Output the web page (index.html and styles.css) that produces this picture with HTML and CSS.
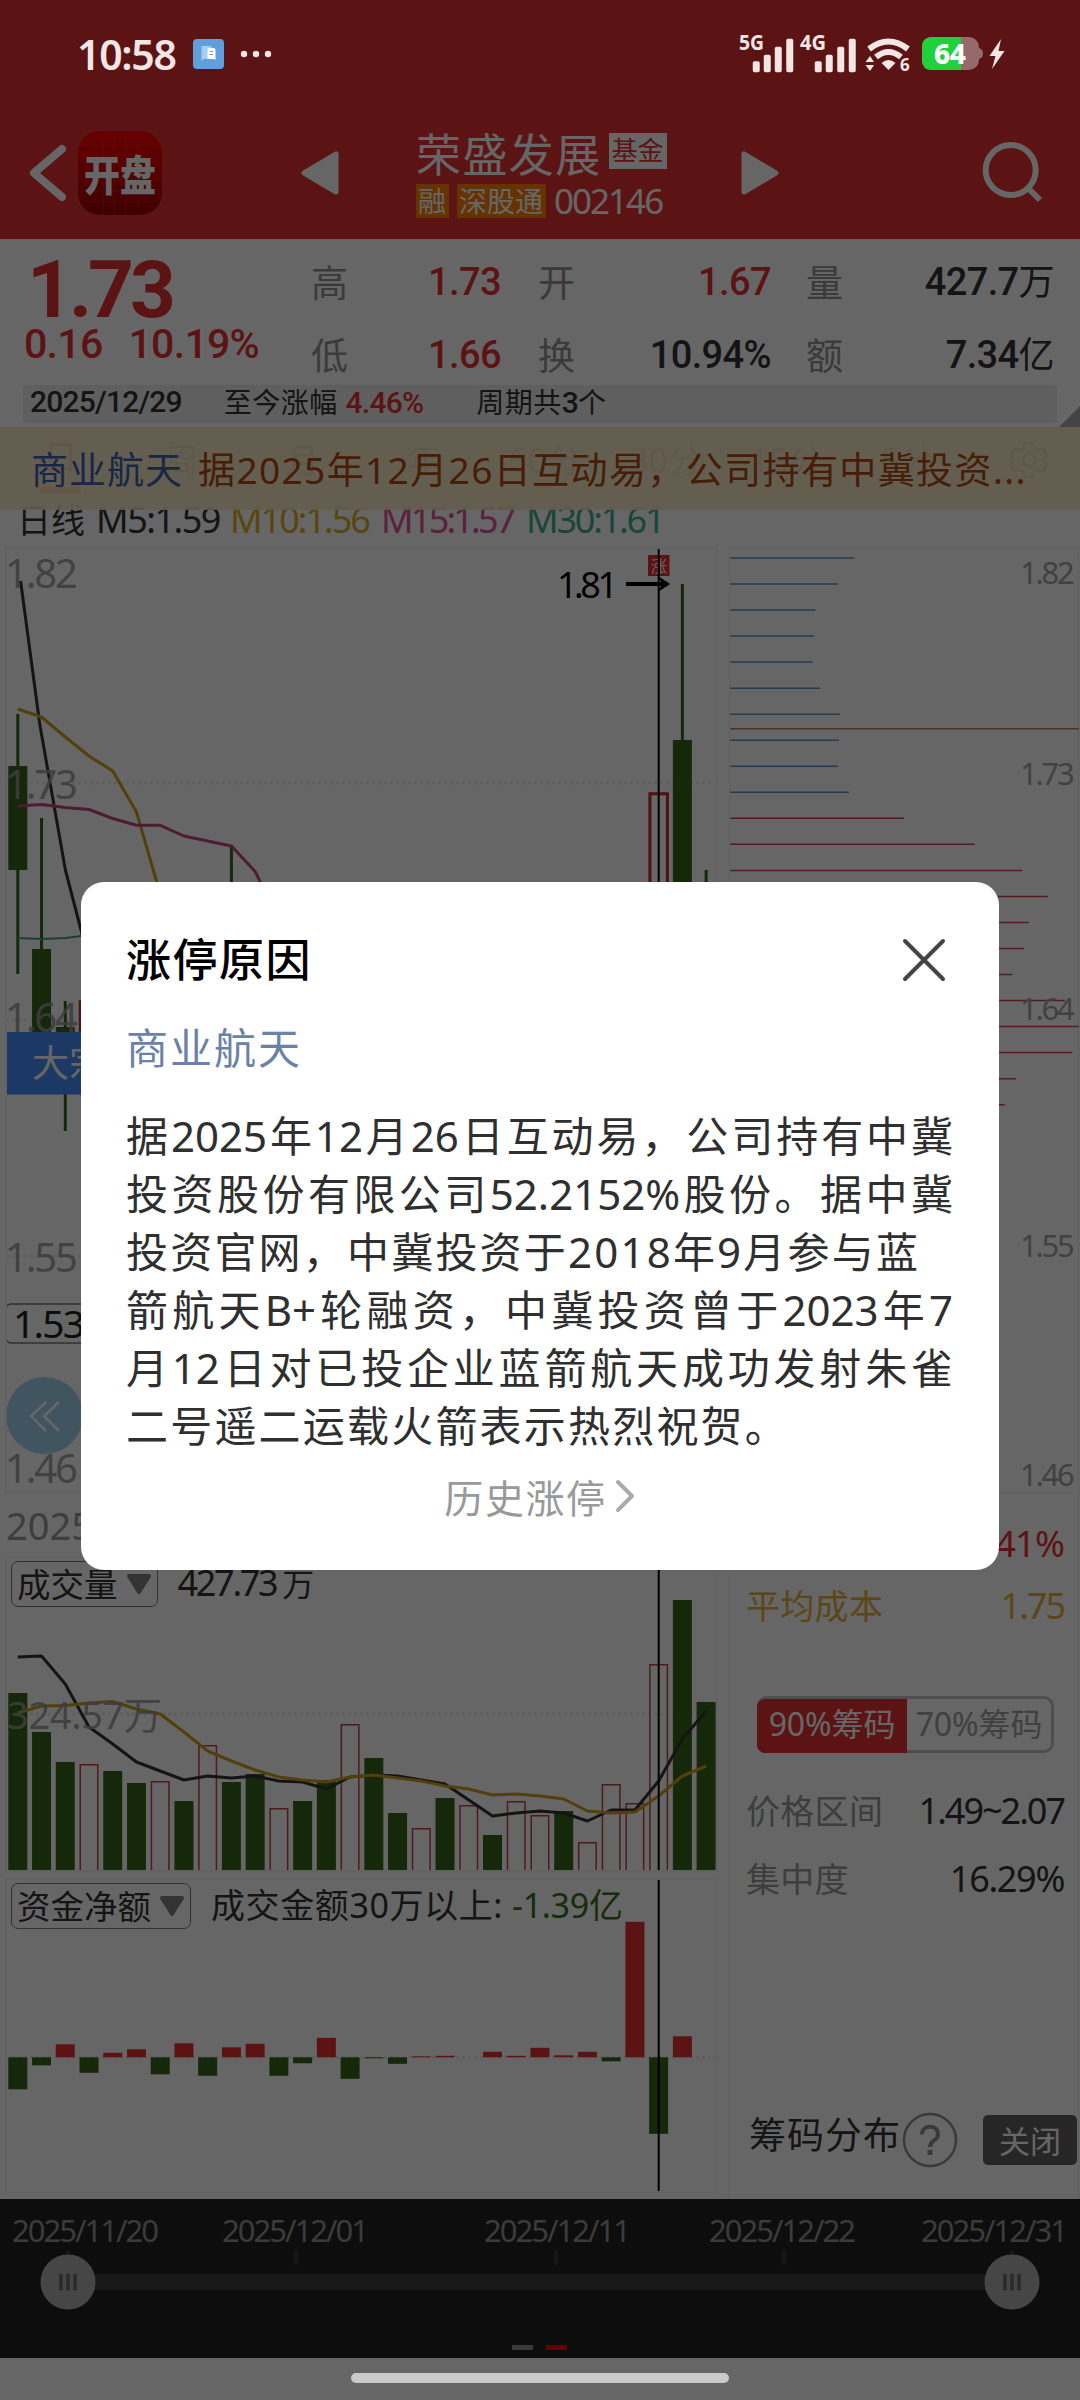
FILE: index.html
```
<!DOCTYPE html>
<html lang="zh-CN">
<head>
<meta charset="UTF-8">
<meta name="viewport" content="width=1080">
<title>荣盛发展 002146</title>
<link rel="stylesheet" href="styles.css">
</head>
<body>
<div class="page">

	<!-- app -->
	<div class="app">
		<header class="topbar">
			<svg class="back" width="38" height="58" viewBox="0 0 38 58"><path d="M34 5 L6 29 L34 53" fill="none" stroke="#fff" stroke-width="8" stroke-linecap="round" stroke-linejoin="round"/></svg>
			<svg class="logo" width="84" height="84" viewBox="0 0 84 84">
				<defs><linearGradient id="lg" x1="0" y1="0" x2="0" y2="1"><stop offset="0" stop-color="#ff0000"/><stop offset=".4" stop-color="#dc0000"/><stop offset="1" stop-color="#9c0000"/></linearGradient></defs>
				<rect width="84" height="84" rx="22" fill="url(#lg)"/>
				<path d="M25 0V84M36 0V84M48 0V84M60 0V84M0 13H84M0 25H84M0 48H84M0 60H84M0 71H84" stroke="#ff5a5a" stroke-opacity=".22" fill="none"/>
				<g transform="translate(6 60) scale(1 1.18)"><text class="logo-text">开盘</text></g>
			</svg>
			<svg class="prev" width="38" height="44" viewBox="0 0 38 44"><path d="M3 22 L35 3 V41 Z" fill="#fff" stroke="#fff" stroke-width="5" stroke-linejoin="round"/></svg>
			<div class="stock">
				<div class="stock-name">荣盛发展<span class="tag-fund">基金</span></div>
				<div class="stock-code"><span class="tag">融</span><span class="tag">深股通</span>002146</div>
			</div>
			<svg class="next" width="38" height="44" viewBox="0 0 38 44"><path d="M35 22 L3 3 V41 Z" fill="#fff" stroke="#fff" stroke-width="5" stroke-linejoin="round"/></svg>
			<svg class="search" width="62" height="64" viewBox="0 0 62 64"><circle cx="28.700" cy="29" r="25" fill="none" stroke="#fff" stroke-width="6"/><path d="M46 47 L58 59" stroke="#fff" stroke-width="6"/></svg>
		</header>

		<section class="quote">
			<div class="price">
				<div class="price-now">1.73</div>
				<div class="price-diff"><span>0.16</span><span>10.19%</span></div>
			</div>
			<dl class="facts">
				<dt>高</dt><dd class="up">1.73</dd><dt>开</dt><dd class="up">1.67</dd><dt>量</dt><dd>427.7<i>万</i></dd>
				<dt>低</dt><dd class="up">1.66</dd><dt>换</dt><dd>10.94%</dd><dt>额</dt><dd>7.34<i>亿</i></dd>
			</dl>
		</section>

		<div class="period-wrap">
			<div class="period">
				<b>2025/12/29</b>
				<span class="since">至今涨幅 <b class="up">4.46%</b></span>
				<span class="count">周期共<b>3</b>个</span>
			</div>
			<svg class="corner" width="22" height="22"><path d="M22 0V22H0Z" fill="#aaa"/></svg>
		</div>

		<div class="tabs-area">
			<nav class="tabs">
				<span class="on">日</span><span>周</span><span>月</span><span>年</span><span>60分</span><span>30分</span><span>15分</span><span>5分</span>
				<span><svg width="38" height="38" viewBox="0 0 38 38"><path d="M15 2h8l1.500 5 4 2.300 5-1.300 4 7-3.500 4 3.500 4-4 7-5-1.300-4 2.300L23 36h-8l-1.500-5-4-2.300-5 1.300-4-7L4 19l-3.500-4 4-7 5 1.300 4-2.300Z" fill="none" stroke="#888" stroke-width="3" stroke-linejoin="round"/><circle cx="19" cy="19" r="6" fill="none" stroke="#888" stroke-width="3"/></svg></span>
			</nav>
			<div class="ma">
				<span class="m-day">日线</span><span class="m5">M5:1.59</span><span class="m10">M10:1.56</span><span class="m15">M15:1.57</span><span class="m30">M30:1.61</span>
			</div>
			<div class="banner"><span class="topic">商业航天</span><span class="news">据2025年12月26日互动易，公司持有中冀投资...</span></div>
		</div>

		<main class="board">
			<div class="charts">
				<svg class="panel" id="kline" width="713" height="946" viewBox="5 547 713 946"></svg>
				<div class="from-date">2025/11/20</div>
				<div class="panel stack">
					<svg id="volume" width="713" height="316" viewBox="5 1556 713 316"></svg>
					<div class="panel-head">
						<span class="select">成交量<svg width="24" height="20" viewBox="0 0 24 20"><path d="M2 2H22L12 18Z" fill="#808080" stroke="#808080" stroke-width="4" stroke-linejoin="round"/></svg></span>
						<span class="vol-now">427.73<i>万</i></span>
					</div>
				</div>
				<div class="panel stack fund">
					<svg id="fund" width="713" height="315" viewBox="5 1878 713 315"></svg>
					<div class="panel-head">
						<span class="select">资金净额<svg width="24" height="20" viewBox="0 0 24 20"><path d="M2 2H22L12 18Z" fill="#808080" stroke="#808080" stroke-width="4" stroke-linejoin="round"/></svg></span>
						<span class="fund-now">成交金额30<i>万以上:</i></span><span class="down">-1.39<i>亿</i></span>
					</div>
				</div>
			</div>
			<aside class="side">
				<svg class="chips" id="chips" width="349" height="947" viewBox="730 547 349 947"></svg>
				<div class="row profit"><span></span><span>9.41%</span></div>
				<div class="row cost"><span>平均成本</span><span>1.75</span></div>
				<div class="switch"><span class="on">90%筹码</span><span>70%筹码</span></div>
				<div class="row range"><span>价格区间</span><b>1.49~2.07</b></div>
				<div class="row focus"><span>集中度</span><b>16.29%</b></div>
				<div class="chips-foot">
					<span>筹码分布</span>
					<svg width="56" height="56" viewBox="0 0 56 56"><circle cx="28" cy="28" r="26" fill="none" stroke="#909090" stroke-width="2.500"/><path d="M20 22.500C20 12 36 12 36 22.500C36 29 28 28 28 35" fill="none" stroke="#909090" stroke-width="4"/><rect x="25.500" y="38" width="5" height="5" fill="#909090"/></svg>
					<button class="close-chips">关闭</button>
				</div>
			</aside>
		</main>

		<footer class="timeline">
			<svg id="slider" width="1080" height="159" viewBox="0 2199 1080 159"></svg>
		</footer>
	</div>

	<!-- dialog -->
	<div class="mask">
		<div class="dialog">
			<div class="dialog-head">
				<h1>涨停原因</h1>
				<svg width="44" height="44" viewBox="0 0 44 44"><path d="M3 3L41 41M41 3L3 41" stroke="#444" stroke-width="4" stroke-linecap="round"/></svg>
			</div>
			<h2>商业航天</h2>
			<p>
				<span class="full">据2025年12月26日互动易，公司持有中冀</span>
				<span class="full">投资股份有限公司52.2152%股份。据中冀</span>
				<span>投资官网，中冀投资于2018年9月参与蓝</span>
				<span class="full">箭航天B+轮融资，中冀投资曾于2023年7</span>
				<span class="full">月12日对已投企业蓝箭航天成功发射朱雀</span>
				<span>二号遥二运载火箭表示热烈祝贺。</span>
			</p>
			<a class="history">历史涨停<svg width="20" height="34" viewBox="0 0 20 34"><path d="M3 3L17 17L3 31" fill="none" stroke="#aaa" stroke-width="4" stroke-linecap="round" stroke-linejoin="round"/></svg></a>
		</div>
	</div>

	<!-- system bars -->
	<div class="system">
		<div class="status">
			<span class="clock">10:58</span>
			<svg class="note" width="31" height="30" viewBox="0 0 31 30"><rect width="31" height="30" rx="4" fill="#5f9fdc"/><path d="M8.500 7H17Q19 7 19 9V20H10.500L8.500 22Z" fill="#a5cdf2"/><path d="M14.500 11Q14.500 9 16.500 9H20.500Q22.500 9 22.500 11V21L21 20H14.500Z" fill="#fff"/><path d="M16.500 12.500H20M16.500 15.500H20" stroke="#5f9fdc"/></svg>
			<svg class="dots" width="32" height="8" viewBox="0 0 32 8"><circle cx="4" cy="4" r="3.200"/><circle cx="16" cy="4" r="3.200"/><circle cx="28" cy="4" r="3.200"/></svg>
			<svg class="signals" width="270" height="60" viewBox="736 24 270 60">
				<text x="740" y="50" class="net" textLength="25" lengthAdjust="spacingAndGlyphs">5G</text>
				<path d="M755.500 63h3.500v7.500h-3.500zM766.500 56.500h3.500v14h-3.500zM777.500 48.500h3.500v22h-3.500zM789 40.500h3.500v30h-3.500z" stroke="#f5e6e6" stroke-width="3.500" stroke-linejoin="round"/>
				<text x="801" y="50" class="net" textLength="26" lengthAdjust="spacingAndGlyphs">4G</text>
				<path d="M817.500 63h3.500v7.500h-3.500zM828.500 56.500h3.500v14h-3.500zM840 48.500h3.500v22h-3.500zM851.500 40.500h3.500v30h-3.500z" stroke="#f5e6e6" stroke-width="3.500" stroke-linejoin="round"/>
				<path d="M870 49Q889.500 34 909 49M877 57Q889.500 47 902 57" fill="none" stroke="#f5e6e6" stroke-width="6"/>
				<path d="M882.500 63Q889.500 57 896.500 63L889.500 70Z"/>
				<path d="M866.500 62L871 56L875 62ZM866.500 65L871 71L875 65Z"/>
				<text x="901" y="71" class="wifi6">6</text>
				<rect x="923" y="37" width="57" height="33" rx="10" fill="#966a6b"/>
				<path d="M980 48q4 1 4 5.500t-4 5.500z" fill="#966a6b"/>
				<path d="M933 37H962V70H933Q923 70 923 60V47Q923 37 933 37Z" fill="#20d13c"/>
				<text x="935" y="63.500" class="power" textLength="32">64</text>
				<path d="M1002 39L990.500 56H996.500L993 69L1005.500 51H999.500Z"/>
			</svg>
		</div>
		<div class="home-bar"></div>
	</div>
</div>
<script src="script.js"></script>
</body>
</html>
```
FILE: styles.css
```
/* -------------------------------------
		GLOBAL
------------------------------------- */
* {
	margin: 0;
	padding: 0;
	box-sizing: border-box;
}

body {
	width: 1080px;
	background: #fff;
	color: #333;
	font-family: "Noto Sans", "Noto Sans CJK SC", sans-serif;
}

svg {
	display: block;
	flex: none;
}

i, b {
	font-style: normal;
}

.page {
	position: relative;
	width: 1080px;
	height: 2400px;
	overflow: hidden;
}

.up { color: #e63032; }
.down { color: #39701c; }

/* -------------------------------------
		TOP BAR
------------------------------------- */
.topbar {
	display: flex;
	align-items: center;
	height: 239px;
	padding: 107px 36px 0 28px;
	background: #e63032;
	color: #fff;
}

.logo { margin-left: 12px; }

.logo-text {
	font: 900 36px "Noto Sans CJK SC", sans-serif;
	fill: #fff;
}

.prev { margin-left: 139px; }

.stock { width: 252px; margin-left: 77px; }

.stock-name {
	display: flex;
	align-items: center;
	height: 50px;
	font-size: 45px;
	letter-spacing: 1.400px;
}

.tag-fund {
	width: 58px;
	height: 36px;
	margin: -4px 0 0 7px;
	background: #fff;
	color: #e63032;
	font-size: 26px;
	line-height: 35px;
	letter-spacing: 0;
	text-align: center;
}

.stock-code {
	display: flex;
	align-items: center;
	gap: 8px;
	height: 36px;
	margin-top: 5px;
	font: 35px/40px "Noto Sans", sans-serif;
	letter-spacing: -2px;
}

.stock-code .tag {
	height: 34px;
	padding: 0 3px 0 2px;
	background: #ff8000;
	font: 28px/33px "Noto Sans CJK SC", sans-serif;
	letter-spacing: 0;
}

.next { margin-left: 73px; }
.search { margin-left: auto; }

/* -------------------------------------
		QUOTE
------------------------------------- */
.quote {
	display: flex;
	height: 146px;
	padding-left: 24px;
}

.price {
	width: 287px;
	color: #e63032;
	font-family: Roboto, sans-serif;
	font-weight: bold;
}

.price-now {
	height: 84px;
	padding: 11px 0 0 3px;
	font-size: 80px;
	line-height: 80px;
	letter-spacing: -4px;
	white-space: nowrap;
}

.price-diff {
	display: flex;
	gap: 26px;
	font-size: 41px;
	font-weight: 500;
	line-height: 42px;
	letter-spacing: -.700px;
}

.facts {
	display: grid;
	grid-template-columns: 44px 147px 80px 190px 80px 203px;
	grid-template-rows: 73px 73px;
	margin-top: 3px;
	padding-top: 4px;
	font-size: 37px;
	line-height: 73px;
}

.facts dt { color: #929292; }
.facts dt:nth-of-type(3n+2) { padding-left: 36px; }
.facts dt:nth-of-type(3n) { padding-left: 34px; }

.facts dd {
	padding-right: 1px;
	font-family: Roboto, "Noto Sans CJK SC", sans-serif;
	font-weight: 500;
	font-size: 38px;
	letter-spacing: -.600px;
	text-align: right;
}

.facts i { font-size: 36px; font-weight: 400; }

.period-wrap {
	display: flex;
	align-items: flex-end;
	height: 43px;
	padding-left: 23px;
}

.period {
	display: flex;
	align-items: center;
	align-self: flex-start;
	width: 1034px;
	height: 38px;
	padding: 0 0 4px 7px;
	border-radius: 4px;
	background: #eee;
	font-size: 28px;
	line-height: 34px;
	letter-spacing: .500px;
}

.period b {
	font: 500 30px/34px Roboto, sans-serif;
	letter-spacing: -.800px;
}

.since { margin-left: 42px; }
.count { margin-left: 53px; }
.corner { margin-left: 1px; }

/* -------------------------------------
		TABS + BANNER
------------------------------------- */
.tabs-area {
	position: relative;
	height: 120px;
	margin-top: -1px;
}

.tabs {
	display: flex;
	height: 66px;
	color: #888;
	font-size: 34px;
	line-height: 58px;
}

.tabs span {
	display: flex;
	flex: none;
	justify-content: center;
	align-items: center;
	width: 121px;
}

.tabs .on {
	color: #e63032;
	border-bottom: 6px solid #e63032;
	border-image: linear-gradient(90deg, transparent 33%, #e63032 33%, #e63032 67%, transparent 67%) 1;
}

.ma {
	display: flex;
	height: 54px;
	padding: 0 0 0 17px;
	font-size: 36px;
	line-height: 54px;
	white-space: nowrap;
}

.ma .m-day { width: 79px; font-size: 34px; }
.ma .m5 { width: 134px; letter-spacing: -1.500px; }
.ma .m10 { width: 151px; color: #e0ac1c; letter-spacing: -2px; }
.ma .m15 { width: 145px; color: #e0529a; letter-spacing: -2.800px; }
.ma .m30 { color: #3cae90; letter-spacing: -2.200px; }

.banner {
	position: absolute;
	top: 0;
	left: 0;
	display: flex;
	width: 1080px;
	height: 83px;
	padding-left: 31px;
	background: rgba(248, 233, 195, .9);
	font-size: 37px;
	line-height: 85px;
	letter-spacing: 1px;
	white-space: nowrap;
}

.topic { width: 167px; color: #3c62b4; }
.news { color: #b04a10; letter-spacing: 1.400px; }

/* -------------------------------------
		CHARTS
------------------------------------- */
.board {
	display: grid;
	grid-template-columns: 713px 349px;
	column-gap: 12px;
	height: 1652px;
	padding-left: 5px;
}

.panel { outline: 2px solid #f4f4f4; outline-offset: -2px; }

.stack { display: grid; }
.stack > * { grid-area: 1 / 1; }
.fund { margin-top: 6px; }

.from-date {
	height: 63px;
	padding-left: 1px;
	color: #999;
	font-size: 38px;
	line-height: 64px;
}

.panel-head {
	display: flex;
	align-items: flex-start;
	height: 56px;
	padding: 5px 0 0 6px;
	font-size: 34px;
	line-height: 44px;
	white-space: nowrap;
}

.select {
	display: flex;
	align-items: center;
	gap: 9px;
	height: 46px;
	padding: 0 6px 0 5px;
	border: 1.500px solid #7a7a7a;
	border-radius: 7px;
	font-size: 33.500px;
}

.vol-now { margin-left: 20px; font-size: 36px; letter-spacing: -2.300px; }
.vol-now i { margin-left: 6px; font-size: 32px; }
.fund-now { margin-left: 20px; letter-spacing: .600px; }
.fund .down { margin-left: 9px; letter-spacing: -.300px; }

svg text { font-family: "Noto Sans", "Noto Sans CJK SC", sans-serif; }
.axis { fill: #999; fill-opacity: .9; font-size: 40px; }
.axis-side { fill: #a2a2a2; font-size: 31px; text-anchor: end; }
.grid-line { stroke: #ececec; stroke-width: 3; stroke-dasharray: 3 3; }
.cross { stroke: #000; stroke-width: 2; }
.g { fill: #36651a; }
.r { fill: #e63032; }
.hollow { fill: none; stroke: #c04444; stroke-width: 1.500; }
.thick { stroke: #c42a2c; stroke-width: 3; }
.line { fill: none; stroke-width: 3; stroke-linejoin: round; }
.black { stroke: #333; }
.yellow { stroke: #cca01a; }
.pink { stroke: #c04880; }
.teal { stroke: #4a9c86; stroke-width: 2; }

/* -------------------------------------
		SIDE
------------------------------------- */
.side {
	display: flex;
	flex-direction: column;
	border-right: 1px solid #eee;
	box-shadow: -1px 0 #f0f0f0;
}

.chips { border-bottom: 1px solid #eee; }

.row {
	display: flex;
	justify-content: space-between;
	align-items: center;
	height: 50px;
	padding: 0 14px 0 16px;
	color: #999;
	font-size: 34px;
	line-height: 50px;
	letter-spacing: .300px;
}

.row > :last-child {
	font-size: 36px;
	font-weight: 400;
	letter-spacing: -2px;
}

.row b { color: #333; }
.row.focus b { letter-spacing: -1.300px; }
.profit { margin-top: 25px; color: #e63032; }
.row.profit > :last-child { letter-spacing: -.800px; }
.cost { margin-top: 12px; color: #e5ae3c; }

.switch {
	display: flex;
	width: 297px;
	height: 57px;
	margin: 65px 0 0 27px;
	border: 3px solid #c4c4c4;
	border-radius: 10px;
	color: #a0a0a0;
	font-size: 32px;
	line-height: 50px;
	text-align: center;
	letter-spacing: -.100px;
}

.switch span { flex: 1; }

.switch .on {
	flex: none;
	width: 150px;
	margin: 0 0 -3px -3px;
	border-radius: 8px 0 0 8px;
	background: #e63032;
	color: #fff;
}

.range { margin-top: 33px; }
.focus { margin-top: 18px; }

.chips-foot {
	display: flex;
	align-items: center;
	height: 56px;
	margin-top: 208px;
	padding-left: 19px;
	font-size: 37px;
	letter-spacing: 1px;
	white-space: nowrap;
}

.chips-foot span { height: 56px; line-height: 46px; }
.chips-foot svg { margin-left: 1px; }

.close-chips {
	flex: none;
	width: 94px;
	height: 50px;
	margin-left: 25px;
	border: 0;
	border-radius: 5px;
	background: #606060;
	color: #fff;
	font: 31px/48px "Noto Sans CJK SC", sans-serif;
}

/* -------------------------------------
		TIMELINE
------------------------------------- */
.timeline { background: #212121; }
.date { fill: #949494; font-size: 31px; }

/* -------------------------------------
		DIALOG
------------------------------------- */
.mask {
	position: absolute;
	top: 0;
	left: 0;
	width: 1080px;
	height: 2400px;
	padding-top: 882px;
	background: rgba(0, 0, 0, .6);
}

.dialog {
	width: 918px;
	height: 688px;
	margin: 0 auto;
	padding: 45px 46px 0 45px;
	border-radius: 23px;
	background: #fff;
}

.dialog-head {
	display: flex;
	justify-content: space-between;
	align-items: center;
	height: 66px;
	padding-right: 7px;
}

.dialog h1 {
	color: #000;
	font-size: 45px;
	font-weight: 500;
	line-height: 66px;
	letter-spacing: 1.500px;
}

.dialog h2 {
	margin-top: 25px;
	color: #6b82a8;
	font-size: 42px;
	font-weight: 400;
	line-height: 60px;
	letter-spacing: 2px;
}

.dialog p {
	margin-top: 29px;
	color: #2f2f2f;
	font-size: 42px;
	letter-spacing: 2.200px;
}

.dialog p span {
	display: block;
	height: 58.100px;
	line-height: 58px;
	white-space: nowrap;
}

.dialog p .full {
	letter-spacing: 0;
	text-align-last: justify;
}

.history {
	display: flex;
	justify-content: center;
	align-items: center;
	gap: 8px;
	height: 60px;
	margin-top: 10px;
	color: #999;
	font-size: 39px;
	letter-spacing: 1.600px;
}

/* -------------------------------------
		SYSTEM BARS
------------------------------------- */
.system {
	position: absolute;
	top: 0;
	left: 0;
	display: flex;
	flex-direction: column;
	justify-content: space-between;
	align-items: center;
	width: 1080px;
	height: 2400px;
	padding-bottom: 17px;
}

.status {
	display: flex;
	align-items: center;
	width: 1080px;
	height: 108px;
	padding-left: 77px;
	color: #f5e6e6;
	fill: #f5e6e6;
}

.clock {
	width: 116px;
	font: 600 41px/48px "Noto Sans", sans-serif;
	letter-spacing: -1.300px;
}

.dots { margin-left: 16px; }
.signals { margin-left: 463px; }
.net { font-size: 22px; font-weight: 700; }
.wifi6 { font-size: 17px; font-weight: 700; }
.power { fill: #fff; font-size: 28px; font-weight: 800; }

.home-bar {
	width: 378px;
	height: 10px;
	border-radius: 5px;
	background: #cacaca;
}
```
FILE: script.js
```
var NS = 'http://www.w3.org/2000/svg';

function add(svg, tag, attrs, text) {
	var el = document.createElementNS(NS, tag);
	for (var k in attrs) el.setAttribute(k, attrs[k]);
	if (text) el.textContent = text;
	svg.appendChild(el);
	return el;
}

// centre of the n-th trading day
function cx(i) {
	return 17.8 + i * 23.735;
}

function bar(svg, i, y1, y2, cls) {
	var inset = cls.indexOf('hollow') < 0 ? 0 : 0.75;
	add(svg, 'rect', {
		x: cx(i) - 9.5 + inset, y: y1 + inset,
		width: 19 - inset * 2, height: y2 - y1 - inset * 2, 'class': cls
	});
}

function line(svg, ys, cls) {
	add(svg, 'polyline', {
		points: ys.map(function (y, i) { return cx(i) + ',' + y; }).join(' '),
		'class': 'line ' + cls
	});
}

function dotted(svg, y) {
	add(svg, 'line', { x1: 6, x2: 717, y1: y, y2: y, 'class': 'grid-line' });
}

/* price */
var k = document.getElementById('kline');
[783, 1020, 1256].forEach(function (y) { dotted(k, y); });
// day, high, low, body top, body bottom
[
	[0, 714, 974, 766, 870],
	[1, 818, 1060, 949, 1040],
	[2, 1001, 1131, 1027, 1090],
	[9, 845, 1000, 900, 960],
	[28, 584, 1100, 740, 1000],
	[29, 870, 1100, 940, 1000]
].forEach(function (c) {
	add(k, 'rect', { x: cx(c[0]) - 1.5, y: c[1], width: 3, height: c[2] - c[1], 'class': 'g' });
	bar(k, c[0], c[3], c[4], 'g');
});
bar(k, 3, 1001, 1060, 'hollow thick');
bar(k, 27, 793, 1000, 'hollow thick');
// starts between two days
add(k, 'polyline', { points: '20.6,581 39.6,723 41.3,733 65.4,870 75.8,910 90,965', 'class': 'line black' });
line(k, [709, 717, 737, 756, 771, 812, 894], 'yellow');
line(k, [806, 804.5, 807.5, 809.5, 818.5, 825.3, 825.3, 836, 841, 846, 871.5, 920], 'pink');
line(k, [938, 939, 938, 935], 'teal');
[['1.82', 588], ['1.73', 799], ['1.64', 1032], ['1.55', 1272], ['1.46', 1483]].forEach(function (t) {
	add(k, 'text', { x: 5, y: t[1], 'class': 'axis', textLength: 73 }, t[0]);
});
add(k, 'rect', { x: 4, y: 1032, width: 160, height: 62.5, fill: '#4590fa' });
add(k, 'text', { x: 32, y: 1077, fill: '#fff', 'font-size': 37 }, '大宗交易');
add(k, 'rect', { x: 6, y: 1304, width: 100, height: 39, rx: 5, fill: '#fff', stroke: '#777', 'stroke-width': 1.5 });
add(k, 'text', { x: 13, y: 1337.5, fill: '#222', 'font-size': 39, textLength: 72 }, '1.53');
add(k, 'circle', { cx: 44.5, cy: 1415.5, r: 38.5, fill: '#a0d4f0' });
add(k, 'path', { d: 'M46 1402L31 1416L46 1431M59 1402L44 1416L59 1431', fill: 'none', stroke: '#fff', 'stroke-width': 2.5 });
add(k, 'rect', { x: 648, y: 555, width: 21.5, height: 21, 'class': 'r' });
add(k, 'text', { x: 651, y: 572, fill: '#fff', 'font-size': 16 }, '涨');
add(k, 'line', { x1: 658.7, x2: 658.7, y1: 547, y2: 1493, 'class': 'cross' });
add(k, 'text', { x: 557, y: 597.5, fill: '#000', 'font-size': 36, textLength: 61 }, '1.81');
add(k, 'path', { d: 'M626 584H668', stroke: '#000', 'stroke-width': 4 });
add(k, 'path', { d: 'M658 576L670 584L658 592L662 584Z', fill: '#000' });

/* volume: negative = red hollow bar */
var v = document.getElementById('volume');
dotted(v, 1714);
[1693, 1732, 1762, -1764, 1771, 1783, -1781, 1801, -1745, 1782, 1774, -1808, 1801, 1780, -1724,
	1758, 1813, -1828, 1798, -1805, 1835, -1801, -1815, 1811, -1842, -1784, -1803, -1664, 1600, 1702
].forEach(function (y, i) {
	bar(v, i, Math.abs(y), 1872, y < 0 ? 'hollow' : 'g');
});
line(v, [1657, 1656, 1684, 1727, 1744, 1762, 1771, 1780, 1776, 1778, 1776, 1781, 1782, 1789, 1777,
	1775, 1776, 1780, 1784, 1800, 1816, 1813, 1811, 1813, 1821, 1810, 1810, 1781, 1739, 1711], 'black');
line(v, [1713, 1706, 1705.5, 1703, 1701.5, 1709, 1714, 1732, 1751, 1761, 1770, 1777, 1780, 1782, 1777,
	1775, 1778, 1781, 1786, 1789, 1795, 1794, 1796, 1799, 1811, 1813, 1812, 1796, 1776, 1766], 'yellow');
add(v, 'text', { x: 7, y: 1729, 'class': 'axis', style: 'font-size:38px', textLength: 155 }, '324.57万');
add(v, 'line', { x1: 658.7, x2: 658.7, y1: 1556, y2: 1872, 'class': 'cross' });

/* net fund flow around the zero line */
var f = document.getElementById('fund');
dotted(f, 2057.3);
[-32, -8, 13, -15.5, 4.5, 8, -17, 14, -18.5, 10, 13.5, -18.5, -6, 19.5, -21.5,
	-1, -6.5, 1, 1.5, 0, 5.5, 1.5, 9.5, 2, 5.5, -4, 135.5, -76.5, 21, 0
].forEach(function (n, i) {
	if (n > 0) bar(f, i, 2057.3 - n, 2057.3, 'r');
	if (n < 0) bar(f, i, 2057.3, 2057.3 - n, 'g');
});
add(f, 'line', { x1: 658.7, x2: 658.7, y1: 1878, y2: 2193, 'class': 'cross' });

/* chip distribution */
var c = document.getElementById('chips');
[854, 837.5, 815.5, 814, 812.5, 820, 840, 839, 838, 849, 904, 974.6, 1022.4, 1048, 1029, 1024,
	1012.5, 1065, 1080, 1072.4, 1016, 1005
].forEach(function (x, i) {
	var y = 558 + i * 26.06;
	add(c, 'line', { x1: 730, x2: x, y1: y, y2: y, stroke: i < 10 ? '#5a94cf' : '#cf4848', 'stroke-width': 1.5 });
});
add(c, 'line', { x1: 730, x2: 1080, y1: 729, y2: 729, stroke: '#c08050', 'stroke-width': 1.5 });
add(c, 'path', { d: 'M730 547.5H1079', stroke: '#eee' });
[['1.82', 584], ['1.73', 785], ['1.64', 1021], ['1.55', 1258], ['1.46', 1487]].forEach(function (t) {
	add(c, 'text', { x: 1075, y: t[1], 'class': 'axis-side', textLength: 55 }, t[0]);
});

/* date slider */
var s = document.getElementById('slider');
[68, 296, 556, 784, 1012].forEach(function (x) {
	add(s, 'rect', { x: x - 2, y: 2250, width: 4, height: 15, rx: 2, fill: '#383838' });
});
[['2025/11/20', 12], ['2025/12/01', 222], ['2025/12/11', 484], ['2025/12/22', 709], ['2025/12/31', 921]].forEach(function (t) {
	add(s, 'text', { x: t[1], y: 2241.5, 'class': 'date', textLength: 147 }, t[0]);
});
add(s, 'rect', { x: 68, y: 2274, width: 944, height: 16, fill: '#3d3d3d' });
[68, 1012].forEach(function (x) {
	add(s, 'circle', { cx: x, cy: 2282, r: 27.5, fill: '#b0b0b0' });
	[-7, 0, 7].forEach(function (d) {
		add(s, 'rect', { x: x + d - 1.8, y: 2273.5, width: 3.6, height: 17.5, rx: 1.8, fill: '#6c6c6c' });
	});
});
add(s, 'rect', { x: 512, y: 2345, width: 21, height: 5, fill: '#909090' });
add(s, 'rect', { x: 546, y: 2345, width: 21, height: 5, fill: '#ff0000' });
```
